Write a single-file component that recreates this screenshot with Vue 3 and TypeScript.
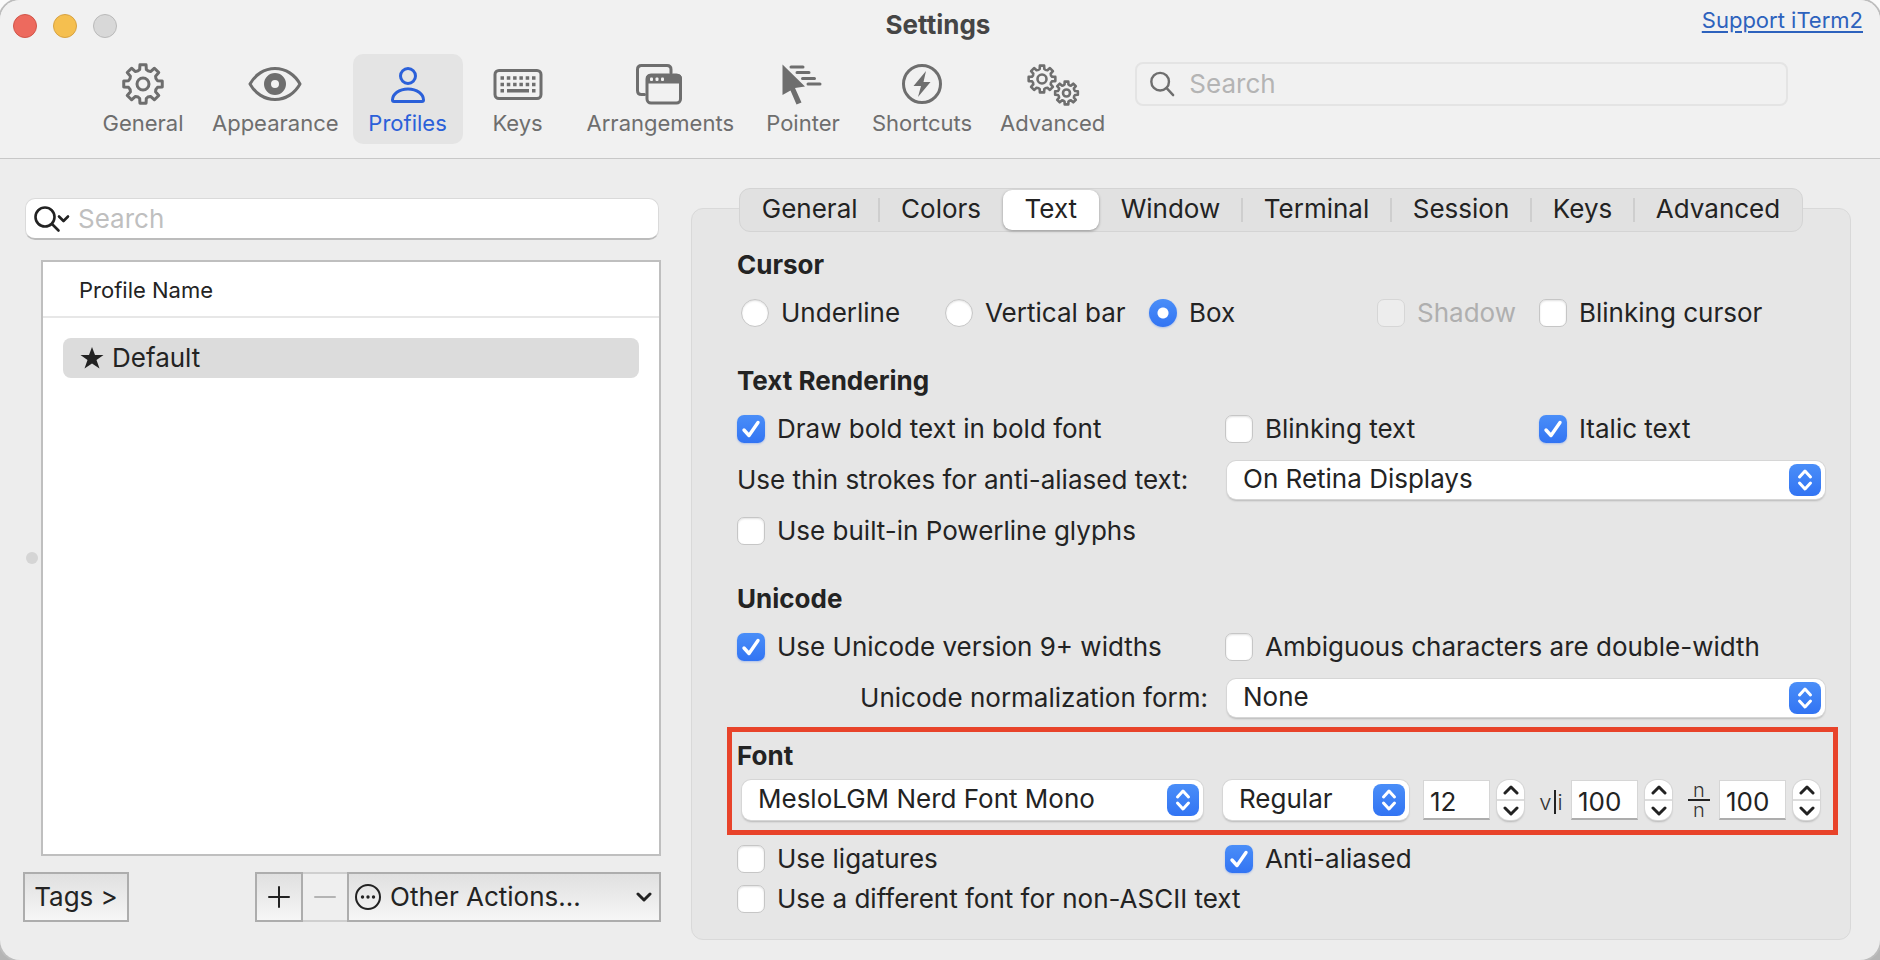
<script setup lang="ts">
import { ref } from 'vue'

interface Option {
  id: string
  label: string
  on?: boolean
  disabled?: boolean
  wide?: boolean
}

/** Outline of a cog centred on (cx, cy), with eight teeth reaching radius r. */
function gear(cx: number, cy: number, r: number): string {
  const root = r * 0.76
  const at = (radius: number, degrees: number): string => {
    const a = (degrees * Math.PI) / 180
    return `${(cx + radius * Math.sin(a)).toFixed(2)} ${(cy - radius * Math.cos(a)).toFixed(2)}`
  }
  let d = ''
  for (let i = 0; i < 8; i++) {
    const t = i * 45
    d += `${i ? 'L' : 'M'}${at(root, t - 13)}L${at(r, t - 9)}L${at(r, t + 9)}L${at(root, t + 13)}`
    d += `Q${at(root * 0.9, t + 22.5)} ${at(root, t + 32)}`
  }
  return d + 'Z'
}

const bigGear = gear(28, 24, 19.5)
const midGear = gear(17, 19, 13.5)
const smallGear = gear(41.5, 33, 11.5)

const tools = ['General', 'Appearance', 'Profiles', 'Keys', 'Arrangements', 'Pointer', 'Shortcuts', 'Advanced']
const activeTool = ref('Profiles')

const tabs = ['General', 'Colors', 'Text', 'Window', 'Terminal', 'Session', 'Keys', 'Advanced']
const activeTab = ref('Text')

const cursor = ref('Box')
const cursorShapes = ['Underline', 'Vertical bar', 'Box']

const cursorOptions = ref<Option[]>([
  { id: 'shadow', label: 'Shadow', disabled: true },
  { id: 'blink-cursor', label: 'Blinking cursor' },
])
const rendering = ref<Option[]>([
  { id: 'bold', label: 'Draw bold text in bold font', on: true },
  { id: 'blink-text', label: 'Blinking text' },
  { id: 'italic', label: 'Italic text', on: true },
])
const powerline = ref<Option[]>([{ id: 'powerline', label: 'Use built-in Powerline glyphs', wide: true }])
const unicode = ref<Option[]>([
  { id: 'unicode9', label: 'Use Unicode version 9+ widths', on: true },
  { id: 'ambiguous', label: 'Ambiguous characters are double-width', wide: true },
])
const fontOptions = ref<Option[]>([
  { id: 'ligatures', label: 'Use ligatures' },
  { id: 'antialias', label: 'Anti-aliased', on: true, wide: true },
])
const nonAscii = ref<Option[]>([{ id: 'nonascii', label: 'Use a different font for non-ASCII text', wide: true }])

const sizes = ref([
  { id: 'size', label: 'Font size', value: '12' },
  { id: 'horizontal', label: 'Horizontal spacing', value: '100' },
  { id: 'vertical', label: 'Vertical spacing', value: '100' },
])

function step(index: number, by: number): void {
  const field = sizes.value[index]
  field.value = String(Number(field.value) + by)
}
</script>

<template>
  <div class="backdrop">
    <div class="window">
      <header class="header">
        <div class="titlebar">
          <div class="lights">
            <button class="light red" aria-label="Close"></button>
            <button class="light yellow" aria-label="Minimize"></button>
            <button class="light grey" aria-label="Zoom" disabled></button>
          </div>
          <h1>Settings</h1>
          <a class="support" href="#support">Support iTerm2</a>
        </div>

        <div class="toolbar">
          <nav class="tools">
            <button
              v-for="tool in tools"
              :key="tool"
              class="tool"
              :class="{ active: tool === activeTool }"
              @click="activeTool = tool"
            >
              <svg class="tool-icon" viewBox="0 0 56 48" aria-hidden="true">
                <g v-if="tool === 'General'" class="line">
                  <path :d="bigGear" />
                  <circle cx="28" cy="24" r="6" />
                </g>
                <g v-else-if="tool === 'Appearance'">
                  <path class="line" d="M3 24C8 15 17 8.500 28 8.500S48 15 53 24C48 33 39 39.500 28 39.500S8 33 3 24Z" />
                  <path
                    class="solid"
                    fill-rule="evenodd"
                    d="M28 13a11 11 0 1 0 0 22a11 11 0 0 0 0-22ZM28 20a4 4 0 1 1 0 8a4 4 0 0 1 0-8Z"
                  />
                </g>
                <g v-else-if="tool === 'Profiles'" class="line">
                  <circle cx="28" cy="16" r="7.500" />
                  <path d="M28 29C37 29 43.500 34 43.500 40Q43.500 41.500 42 41.500H14Q12.500 41.500 12.500 40C12.500 34 19 29 28 29Z" />
                </g>
                <g v-else-if="tool === 'Keys'">
                  <rect class="line" x="5" y="10.500" width="46" height="28" rx="4" />
                  <path
                    class="keys"
                    d="M10.500 18h35M10.500 24.500h35"
                    stroke-dasharray="3.500 2.800"
                  />
                  <path class="keys" d="M10.500 30.800H14M17 30.800H39M42 30.800H45.500" />
                </g>
                <g v-else-if="tool === 'Arrangements'">
                  <path class="line" d="M12.500 34.500H9.500Q5.500 34.500 5.500 30.500V9.500Q5.500 5.500 9.500 5.500H35Q39 5.500 39 9.500V13" />
                  <rect class="line" x="15" y="15" width="33.500" height="28" rx="4" />
                  <path class="solid" d="M14 23.500V19Q14 14 19 14H45Q50 14 50 19V23.500Z" />
                  <g class="hole">
                    <rect x="18" y="17.500" width="3" height="3.500" rx="1" />
                    <rect x="23.500" y="17.500" width="3" height="3.500" rx="1" />
                    <rect x="29" y="17.500" width="3" height="3.500" rx="1" />
                  </g>
                </g>
                <g v-else-if="tool === 'Pointer'">
                  <path class="solid" d="M7.500 4.500L30 26.500L20 28L26.500 42.500L21.500 44.500L15.500 30.500L7.500 35Z" />
                  <path class="speed" d="M16 7H28M22 12.500H34M27.500 18.500H39.500M33 24H45" />
                </g>
                <g v-else-if="tool === 'Shortcuts'">
                  <circle class="line" cx="28" cy="24" r="18.500" />
                  <path class="solid" d="M32 11L19.500 26H27L24 37L36.500 22H29.500Z" />
                </g>
                <g v-else class="line thin">
                  <path :d="midGear" />
                  <circle cx="17" cy="19" r="4.500" />
                  <path :d="smallGear" />
                  <circle cx="41.500" cy="33" r="3.500" />
                </g>
              </svg>
              <span>{{ tool }}</span>
            </button>
          </nav>

          <label class="find">
            <svg class="lens" viewBox="0 0 28 28" aria-hidden="true">
              <circle cx="12" cy="11.500" r="9.500" />
              <path d="M19 18.500L26 26" />
            </svg>
            <input type="search" placeholder="Search" aria-label="Search settings" />
          </label>
        </div>
      </header>

      <main class="content">
        <section class="profiles">
          <label class="filter">
            <svg class="filter-lens" viewBox="0 0 36 28" aria-hidden="true">
              <circle cx="11" cy="12" r="9.500" />
              <path d="M18 19L24.500 25.500M25 11.500L29.500 16L34 11.500" />
            </svg>
            <input type="search" placeholder="Search" aria-label="Search profiles" />
          </label>

          <div class="list-row">
            <span class="grip"></span>
            <div class="list">
              <table>
                <thead>
                  <tr><th scope="col">Profile Name</th></tr>
                </thead>
                <tbody>
                  <tr>
                    <td>
                      <div class="profile">
                        <svg viewBox="0 0 24 24" aria-hidden="true">
                          <path d="M12 1L15 9H23.500L16.500 14L19.500 22.500L12 17.500L4.500 22.500L7.500 14L.5 9H9Z" />
                        </svg>
                        <span>Default</span>
                      </div>
                    </td>
                  </tr>
                </tbody>
              </table>
            </div>
          </div>

          <div class="actions">
            <button class="bevel tags">Tags &gt;</button>
            <div class="bar">
              <button class="bevel plus" aria-label="Add profile">
                <svg viewBox="0 0 22 22" aria-hidden="true"><path d="M11 1V21M1 11H21" /></svg>
              </button>
              <button class="bevel minus" aria-label="Remove profile" disabled>
                <svg viewBox="0 0 22 22" aria-hidden="true"><path d="M1 11H21" /></svg>
              </button>
              <button class="bevel other">
                <svg class="more" viewBox="0 0 28 28" aria-hidden="true">
                  <circle class="ring" cx="14" cy="14" r="12" />
                  <circle cx="8.500" cy="14" r="1.700" />
                  <circle cx="14" cy="14" r="1.700" />
                  <circle cx="19.500" cy="14" r="1.700" />
                </svg>
                <span>Other Actions...</span>
                <svg class="chevron" viewBox="0 0 16 12" aria-hidden="true"><path d="M2 3L8 9L14 3" /></svg>
              </button>
            </div>
          </div>
        </section>

        <section class="panel">
          <div class="tabs" role="tablist">
            <button
              v-for="tab in tabs"
              :key="tab"
              role="tab"
              class="tab"
              :class="{ active: tab === activeTab }"
              :aria-selected="tab === activeTab"
              @click="activeTab = tab"
            >
              {{ tab }}
            </button>
          </div>

          <div class="group">
            <h2>Cursor</h2>
            <div class="cursor-row">
              <label v-for="shape in cursorShapes" :key="shape" class="choice">
                <input v-model="cursor" type="radio" name="cursor" :value="shape" />
                <span>{{ shape }}</span>
              </label>
              <label v-for="o in cursorOptions" :key="o.id" class="choice" :class="{ off: o.disabled }">
                <span class="box">
                  <input v-model="o.on" type="checkbox" :disabled="o.disabled" />
                  <svg viewBox="0 0 28 28" aria-hidden="true"><path d="M7 15L12 20.500L21 7.500" /></svg>
                </span>
                <span>{{ o.label }}</span>
              </label>
            </div>
          </div>

          <div class="group">
            <h2>Text Rendering</h2>
            <div class="columns">
              <label v-for="o in rendering" :key="o.id" class="choice">
                <span class="box">
                  <input v-model="o.on" type="checkbox" />
                  <svg viewBox="0 0 28 28" aria-hidden="true"><path d="M7 15L12 20.500L21 7.500" /></svg>
                </span>
                <span>{{ o.label }}</span>
              </label>
            </div>
            <div class="columns">
              <label class="caption" for="strokes">Use thin strokes for anti-aliased text:</label>
              <div class="popup wide">
                <select id="strokes"><option>On Retina Displays</option></select>
                <svg class="knob" viewBox="0 0 32 32" aria-hidden="true"><path d="M10.500 13L16 7L21.500 13M10.500 19L16 25L21.500 19" /></svg>
              </div>
            </div>
            <div class="columns">
              <label v-for="o in powerline" :key="o.id" class="choice wide">
                <span class="box">
                  <input v-model="o.on" type="checkbox" />
                  <svg viewBox="0 0 28 28" aria-hidden="true"><path d="M7 15L12 20.500L21 7.500" /></svg>
                </span>
                <span>{{ o.label }}</span>
              </label>
            </div>
          </div>

          <div class="group">
            <h2>Unicode</h2>
            <div class="columns">
              <label v-for="o in unicode" :key="o.id" class="choice" :class="{ wide: o.wide }">
                <span class="box">
                  <input v-model="o.on" type="checkbox" />
                  <svg viewBox="0 0 28 28" aria-hidden="true"><path d="M7 15L12 20.500L21 7.500" /></svg>
                </span>
                <span>{{ o.label }}</span>
              </label>
            </div>
            <div class="columns">
              <label class="caption right" for="normal">Unicode normalization form:</label>
              <div class="popup wide">
                <select id="normal"><option>None</option></select>
                <svg class="knob" viewBox="0 0 32 32" aria-hidden="true"><path d="M10.500 13L16 7L21.500 13M10.500 19L16 25L21.500 19" /></svg>
              </div>
            </div>
          </div>

          <div class="font-box">
            <h2>Font</h2>
            <div class="font-row">
              <div class="popup tall family">
                <select aria-label="Font family"><option>MesloLGM Nerd Font Mono</option></select>
                <svg class="knob" viewBox="0 0 32 32" aria-hidden="true"><path d="M10.500 13L16 7L21.500 13M10.500 19L16 25L21.500 19" /></svg>
              </div>
              <div class="popup tall weight">
                <select aria-label="Font weight"><option>Regular</option></select>
                <svg class="knob" viewBox="0 0 32 32" aria-hidden="true"><path d="M10.500 13L16 7L21.500 13M10.500 19L16 25L21.500 19" /></svg>
              </div>
              <div v-for="(s, i) in sizes" :key="s.id" class="number">
                <label v-if="i === 1" class="sign across" :for="s.id"><span>v</span><span class="bar-v"></span><span>i</span></label>
                <label v-if="i === 2" class="sign stacked" :for="s.id"><span>n</span><span>n</span></label>
                <input :id="s.id" v-model="s.value" type="text" :aria-label="s.label" />
                <div class="stepper">
                  <button :aria-label="s.label + ' up'" @click="step(i, 1)">
                    <svg viewBox="0 0 16 12" aria-hidden="true"><path d="M2 9L8 3L14 9" /></svg>
                  </button>
                  <button :aria-label="s.label + ' down'" @click="step(i, -1)">
                    <svg viewBox="0 0 16 12" aria-hidden="true"><path d="M2 3L8 9L14 3" /></svg>
                  </button>
                </div>
              </div>
            </div>
          </div>

          <div class="after">
            <div class="columns">
              <label v-for="o in fontOptions" :key="o.id" class="choice" :class="{ wide: o.wide }">
                <span class="box">
                  <input v-model="o.on" type="checkbox" />
                  <svg viewBox="0 0 28 28" aria-hidden="true"><path d="M7 15L12 20.500L21 7.500" /></svg>
                </span>
                <span>{{ o.label }}</span>
              </label>
            </div>
            <label v-for="o in nonAscii" :key="o.id" class="choice">
              <span class="box">
                <input v-model="o.on" type="checkbox" />
                <svg viewBox="0 0 28 28" aria-hidden="true"><path d="M7 15L12 20.500L21 7.500" /></svg>
              </span>
              <span>{{ o.label }}</span>
            </label>
          </div>
        </section>
      </main>
    </div>
  </div>
</template>

<style>
body {
  margin: 0;
}
</style>

<style scoped>
.backdrop {
  min-height: 100vh;
  display: flex;
  background: linear-gradient(#fafafa, #fafafa 50%, #b5b5b5 50%);
  font-family: Inter, "Liberation Sans", sans-serif;
  font-size: 26px;
  line-height: 32px;
  color: #232323;
}
.backdrop *,
.backdrop *::before {
  box-sizing: border-box;
}
button,
input,
select {
  margin: 0;
  padding: 0;
  border: 0;
  font: inherit;
  color: inherit;
  background: none;
  appearance: none;
}
svg {
  display: block;
  flex: none;
  fill: none;
  stroke-linecap: round;
  stroke-linejoin: round;
}
h1,
h2 {
  margin: 0;
  font-size: 26px;
  line-height: 32px;
  font-weight: 700;
}
.window {
  flex: 1;
  min-width: 0;
  display: flex;
  flex-direction: column;
  border-radius: 20px;
  overflow: hidden;
  background: #ededed;
  box-shadow: 0 0 0 2px #bdbdbd;
}

/* Header */
.header {
  background: #f1f1f1;
  border-bottom: 1px solid #c8c8c8;
  padding-bottom: 14px;
}
.titlebar {
  height: 54px;
  padding: 4px 17px 0 13px;
  display: grid;
  grid-template-columns: 1fr auto 1fr;
}
.lights {
  display: flex;
  gap: 16px;
  padding-top: 10px;
}
.light {
  width: 24px;
  height: 24px;
  border-radius: 50%;
  border: 1px solid #d05549;
  background: #ed6a5e;
}
.light.yellow {
  background: #f5bf4f;
  border-color: #d6a243;
}
.light.grey {
  background: #d8d8d8;
  border-color: #b9b9b9;
}
h1 {
  padding-top: 5px;
  color: #454545;
}
.support {
  justify-self: end;
  font-size: 22px;
  color: #2d62bd;
  text-decoration: underline;
  text-underline-offset: 3px;
}
.toolbar {
  display: flex;
  align-items: flex-start;
  gap: 16px;
  padding: 0 92px 0 88px;
}
.tools {
  display: flex;
}
.tool {
  min-width: 110px;
  height: 90px;
  padding: 6px 14px 0;
  border-radius: 10px;
  display: flex;
  flex-direction: column;
  align-items: center;
  font-size: 22px;
  line-height: 30px;
  color: #6e6e6e;
}
.tool.active {
  background: #e4e4e4;
  color: #2b60d9;
}
.tool-icon {
  width: 56px;
  height: 48px;
}
.line {
  stroke: currentColor;
  stroke-width: 3;
}
.thin {
  stroke-width: 2.6;
}
.solid {
  fill: currentColor;
}
.keys {
  stroke: currentColor;
  stroke-width: 3.6;
  stroke-linecap: butt;
}
.speed {
  stroke: currentColor;
  stroke-width: 3;
}
.hole {
  fill: #f1f1f1;
}
.find {
  flex: 1;
  min-width: 0;
  height: 44px;
  margin-top: 8px;
  padding: 0 12px;
  display: flex;
  align-items: center;
  gap: 14px;
  border: 2px solid #e4e4e4;
  border-radius: 8px;
}
.lens {
  width: 26px;
  height: 26px;
  stroke: #6e6e6e;
  stroke-width: 2.6;
}
.find input,
.filter input {
  flex: 1;
  min-width: 0;
  outline: 0;
}
.find input::placeholder {
  color: #b4b4b4;
  opacity: 1;
}

/* Profiles */
.content {
  flex: 1;
  display: grid;
  grid-template-columns: minmax(0, 638fr) minmax(0, 1160fr);
  gap: 30px;
  padding: 39px 29px 20px 23px;
}
.profiles {
  display: flex;
  flex-direction: column;
  padding-bottom: 18px;
}
.filter {
  height: 42px;
  margin: 0 2px;
  padding: 0 8px;
  display: flex;
  align-items: center;
  gap: 8px;
  background: #fff;
  border: 1px solid #dadada;
  border-bottom: 2px solid #bcbcbc;
  border-radius: 10px;
}
.filter-lens {
  width: 36px;
  height: 28px;
  stroke: #222;
  stroke-width: 2.6;
}
.filter input::placeholder {
  color: #bfbfbf;
  opacity: 1;
}
.list-row {
  flex: 1;
  margin-top: 20px;
  display: flex;
  align-items: center;
  gap: 3px;
}
.grip {
  flex: none;
  width: 12px;
  height: 12px;
  margin-left: 3px;
  border-radius: 50%;
  background: #d5d5d5;
}
.list {
  flex: 1;
  align-self: stretch;
  background: #fff;
  border: 2px solid #bfbfbf;
}
table {
  width: 100%;
  border-collapse: collapse;
}
th {
  height: 55px;
  padding: 2px 0 0 36px;
  text-align: left;
  font-size: 22px;
  font-weight: 400;
  border-bottom: 2px solid #e7e7e7;
}
td {
  padding: 20px;
}
.profile {
  height: 40px;
  padding-left: 17px;
  display: flex;
  align-items: center;
  gap: 8px;
  background: #dcdcdc;
  border-radius: 8px;
}
.profile svg {
  width: 24px;
  height: 24px;
  fill: #222;
}
.actions {
  margin-top: 16px;
  display: flex;
  justify-content: space-between;
}
.bevel {
  height: 50px;
  border: 2px solid #adadad;
  background: linear-gradient(#e0e0e0, #f6f6f6);
  display: flex;
  align-items: center;
  justify-content: center;
}
.tags {
  width: 106px;
}
.bar {
  display: flex;
}
.bar svg {
  width: 22px;
  height: 22px;
  stroke: #222;
  stroke-width: 2;
}
.plus {
  width: 48px;
}
.minus {
  width: 44px;
  border-color: #cfcfcf;
  border-width: 2px 0;
  background: #efefef;
}
.bar .minus svg {
  stroke: #b4b4b4;
}
.other {
  width: 314px;
  padding: 0 7px 0 5px;
  justify-content: flex-start;
  gap: 8px;
}
.bar .more {
  width: 28px;
  height: 28px;
  fill: #222;
  stroke: none;
}
.more .ring {
  fill: none;
  stroke: #222;
  stroke-width: 2;
}
.bar .chevron {
  width: 16px;
  height: 12px;
  margin-left: auto;
  stroke-width: 3;
}

/* Text panel */
.panel {
  margin-top: 10px;
  padding: 0 25px 24px 45px;
  background: #e6e6e6;
  border: 1px solid #d9d9d9;
  border-radius: 12px;
}
.tabs {
  height: 44px;
  margin: -21px 22px 0 2px;
  display: flex;
  background: #e1e1e1;
  border: 1px solid #d4d4d4;
  border-radius: 11px;
}
.tab {
  flex: 1 1 auto;
  margin: 1px 0;
  padding-bottom: 2px;
  border-radius: 9px;
  display: flex;
  align-items: center;
  justify-content: center;
  position: relative;
}
.tab:not(:first-child)::before {
  content: "";
  position: absolute;
  left: -1px;
  top: 8px;
  bottom: 8px;
  width: 2px;
  background: #cecece;
}
.tab.active {
  background: #fff;
  box-shadow: 0 1px 3px rgba(0, 0, 0, 0.35);
}
.tab.active::before,
.tab.active + .tab::before {
  display: none;
}
.group {
  display: flex;
  flex-direction: column;
  gap: 16px;
  margin-top: 36px;
}
.tabs + .group {
  margin-top: 17px;
}
.columns {
  display: grid;
  grid-template-columns: 488fr 314fr 286fr;
  align-items: center;
}
.wide {
  grid-column-end: span 2;
}
.cursor-row {
  display: grid;
  grid-template-columns: 204fr 204fr 228fr 162fr 286fr;
  padding-left: 4px;
}
.choice {
  display: flex;
  align-items: center;
  gap: 12px;
  white-space: nowrap;
}
.choice input {
  display: block;
  flex: none;
  width: 28px;
  height: 28px;
  background: #fff;
  border: 1px solid #c6c6c6;
  box-shadow: inset 0 1px 2px rgba(0, 0, 0, 0.12);
}
.choice input[type="radio"] {
  border-radius: 50%;
}
.choice input[type="checkbox"] {
  border-radius: 7px;
}
.choice input:checked {
  border: 0;
  background: linear-gradient(#4a8ef8, #3274f3);
  box-shadow: 0 1px 2px rgba(50, 110, 240, 0.3);
}
.choice input[type="radio"]:checked {
  background: radial-gradient(circle, #fff 5px, transparent 6px), linear-gradient(#4a8ef8, #3274f3);
}
.choice.off {
  color: #afafaf;
}
.choice.off input {
  background: #ededed;
  border-color: #d6d6d6;
  box-shadow: none;
}
.box {
  position: relative;
}
.box svg {
  position: absolute;
  inset: 0;
  width: 28px;
  height: 28px;
  stroke: #fff;
  stroke-width: 3.4;
  pointer-events: none;
  visibility: hidden;
}
.box input:checked + svg {
  visibility: visible;
}
.caption {
  white-space: nowrap;
}
.caption.right {
  justify-self: end;
  padding-right: 17px;
}
.popup {
  position: relative;
  height: 38px;
  margin-left: 2px;
}
.popup select {
  display: block;
  width: 100%;
  height: 100%;
  padding: 0 40px 2px 16px;
  border-radius: 9px;
  background: #fff;
  box-shadow: 0 0 0 1px #d6d6d6, 0 2px 2px #b8b8b8;
}
.popup.tall {
  height: 40px;
}
.knob {
  position: absolute;
  right: 4px;
  top: 3px;
  width: 32px;
  height: 32px;
  border-radius: 8px;
  background: linear-gradient(#4a8ef8, #3274f3);
  stroke: #fff;
  stroke-width: 3;
  pointer-events: none;
}
.tall .knob {
  top: 4px;
}

/* Font */
.font-box {
  margin: 10px -13px 0 -10px;
  padding: 8px 13px 10px 4px;
  border: 5px solid #e8432a;
}
.font-box h2 {
  padding-left: 1px;
}
.font-row {
  margin-top: 8px;
  padding-left: 4px;
  display: flex;
  align-items: center;
}
.popup.family {
  flex: 1;
  min-width: 0;
}
.popup.weight {
  flex: none;
  width: 186px;
  margin-left: 20px;
}
.number {
  display: flex;
  align-items: center;
  gap: 7px;
  margin-left: 14px;
}
.number input {
  width: 67px;
  height: 40px;
  padding: 3px 0 0 6px;
  background: #fff;
  border: 1px solid #d6d6d6;
  border-bottom: 2px solid #adadad;
}
.sign {
  width: 26px;
  display: flex;
  justify-content: center;
  color: #333;
}
.across {
  gap: 2px;
  padding-top: 4px;
  font-size: 22px;
  font-weight: 300;
}
.bar-v {
  width: 2px;
  height: 24px;
  margin-top: 4px;
  background: #222;
}
.stacked {
  flex-direction: column;
  align-items: center;
  font-size: 20px;
  font-weight: 300;
  line-height: 18px;
}
.stacked span {
  width: 22px;
  text-align: center;
}
.stacked span:first-child {
  border-bottom: 2px solid #222;
}
.stepper {
  width: 27px;
  height: 40px;
  display: flex;
  flex-direction: column;
  background: #fff;
  border-radius: 12px;
  box-shadow: 0 0 0 1px #d6d6d6, 0 2px 2px #b8b8b8;
}
.stepper button {
  flex: 1;
  display: flex;
  align-items: center;
  justify-content: center;
}
.stepper button:first-child {
  border-bottom: 2px solid #dcdcdc;
}
.stepper svg {
  width: 16px;
  height: 12px;
  stroke: #222;
  stroke-width: 3;
}
.after {
  margin-top: 8px;
  display: flex;
  flex-direction: column;
  gap: 8px;
}
</style>
